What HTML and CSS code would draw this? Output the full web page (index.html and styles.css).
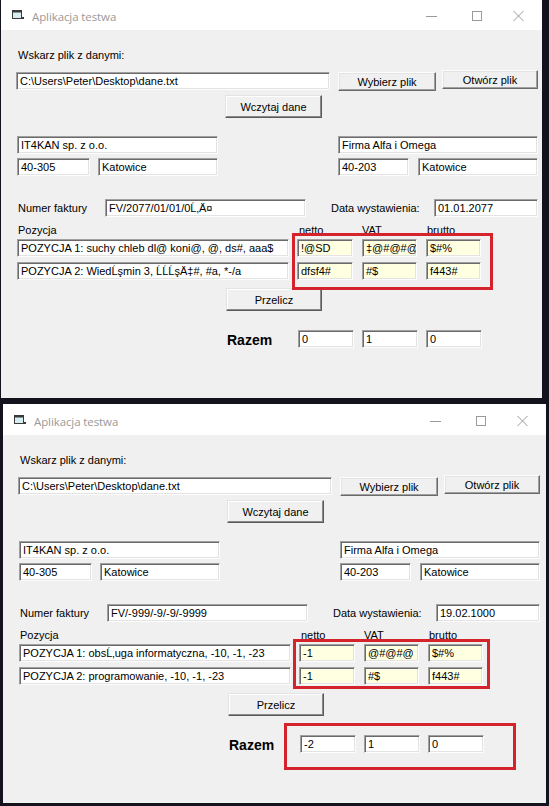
FILE: index.html
```html
<!DOCTYPE html>
<html lang="pl">
<head>
<meta charset="utf-8">
<title>Aplikacja testwa</title>
<link rel="stylesheet" href="styles.css">
</head>
<body>
<div class="desk">

  <div class="win win1">
    <div class="titlebar">
      <svg class="appicon" width="12" height="11" viewBox="0 0 12 11"><rect x="0.5" y="0.5" width="9" height="8" fill="#d6eef2" stroke="#3a3a3a"/><rect x="0.5" y="0.5" width="9" height="2" fill="#3a3a3a"/><rect x="10" y="7" width="2" height="2" fill="#3a3a3a"/></svg>
      <span class="title">Aplikacja testwa</span>
      <div class="ctrls">
        <svg class="c-min" width="11" height="10" viewBox="0 0 11 10"><line x1="0" y1="5.5" x2="11" y2="5.5" stroke="#9a9a9a" stroke-width="1"/></svg>
        <svg class="c-max" width="10" height="10" viewBox="0 0 10 10"><rect x="0.5" y="0.5" width="9" height="9" fill="none" stroke="#9a9a9a"/></svg>
        <svg class="c-close" width="11" height="10" viewBox="0 0 11 10"><path d="M0.5 0 L10.5 10 M10.5 0 L0.5 10" stroke="#9a9a9a" stroke-width="1"/></svg>
      </div>
    </div>
    <div class="body">
      <div class="row r-lbl"><span class="lbl ml17">Wskarz plik z danymi:</span></div>
      <div class="row r-path">
        <div class="tb w-path">C:\Users\Peter\Desktop\dane.txt</div>
        <div class="btn b-wyb">Wybierz plik</div>
        <div class="btn b-otw">Otwórz plik</div>
      </div>
      <div class="row r-load"><div class="btn def b-load">Wczytaj dane</div></div>
      <div class="row r-firm">
        <div class="tb w-name1">IT4KAN sp. z o.o.</div>
        <div class="tb w-name2">Firma Alfa i Omega</div>
      </div>
      <div class="row r-addr">
        <div class="tb w-zip1">40-305</div>
        <div class="tb w-city1">Katowice</div>
        <div class="tb w-zip2">40-203</div>
        <div class="tb w-city2">Katowice</div>
      </div>
      <div class="row r-inv">
        <span class="lbl l-num">Numer faktury</span>
        <div class="tb w-fv">FV/2077/01/01/0Ĺ‚Ä¤</div>
        <span class="lbl l-date">Data wystawienia:</span>
        <div class="tb w-date">01.01.2077</div>
      </div>
      <div class="row r-hdr">
        <span class="lbl l-poz">Pozycja</span>
        <span class="lbl l-netto">netto</span>
        <span class="lbl l-vat">VAT</span>
        <span class="lbl">brutto</span>
      </div>
      <div class="row r-item1">
        <div class="tb w-item">POZYCJA 1: suchy chleb dl@ koni@, @, ds#, aaa$</div>
        <div class="tb y w-n">!@SD</div>
        <div class="tb y w-v">‡@#@#@</div>
        <div class="tb y w-b">$#%</div>
      </div>
      <div class="row r-item2">
        <div class="tb w-item">POZYCJA 2: WiedĹşmin 3, ĹĹĹşÄ‡#, #a, *-/a</div>
        <div class="tb y w-n">dfsf4#</div>
        <div class="tb y w-v">#$</div>
        <div class="tb y w-b">f443#</div>
      </div>
      <div class="row r-calc"><div class="btn def b-calc">Przelicz</div></div>
      <div class="row r-sum">
        <span class="razem">Razem</span>
        <div class="tb w-s1">0</div>
        <div class="tb w-s2">1</div>
        <div class="tb w-s3">0</div>
      </div>
      <div class="mark mark-a1"></div>
    </div>
  </div>

  <div class="win win2">
    <div class="titlebar">
      <svg class="appicon" width="12" height="11" viewBox="0 0 12 11"><rect x="0.5" y="0.5" width="9" height="8" fill="#d6eef2" stroke="#3a3a3a"/><rect x="0.5" y="0.5" width="9" height="2" fill="#3a3a3a"/><rect x="10" y="7" width="2" height="2" fill="#3a3a3a"/></svg>
      <span class="title">Aplikacja testwa</span>
      <div class="ctrls">
        <svg class="c-min" width="11" height="10" viewBox="0 0 11 10"><line x1="0" y1="5.5" x2="11" y2="5.5" stroke="#9a9a9a" stroke-width="1"/></svg>
        <svg class="c-max" width="10" height="10" viewBox="0 0 10 10"><rect x="0.5" y="0.5" width="9" height="9" fill="none" stroke="#9a9a9a"/></svg>
        <svg class="c-close" width="11" height="10" viewBox="0 0 11 10"><path d="M0.5 0 L10.5 10 M10.5 0 L0.5 10" stroke="#9a9a9a" stroke-width="1"/></svg>
      </div>
    </div>
    <div class="body">
      <div class="row r-lbl"><span class="lbl ml17">Wskarz plik z danymi:</span></div>
      <div class="row r-path">
        <div class="tb w-path">C:\Users\Peter\Desktop\dane.txt</div>
        <div class="btn b-wyb">Wybierz plik</div>
        <div class="btn b-otw">Otwórz plik</div>
      </div>
      <div class="row r-load"><div class="btn def b-load">Wczytaj dane</div></div>
      <div class="row r-firm">
        <div class="tb w-name1">IT4KAN sp. z o.o.</div>
        <div class="tb w-name2">Firma Alfa i Omega</div>
      </div>
      <div class="row r-addr">
        <div class="tb w-zip1">40-305</div>
        <div class="tb w-city1">Katowice</div>
        <div class="tb w-zip2">40-203</div>
        <div class="tb w-city2">Katowice</div>
      </div>
      <div class="row r-inv">
        <span class="lbl l-num">Numer faktury</span>
        <div class="tb w-fv">FV/-999/-9/-9/-9999</div>
        <span class="lbl l-date">Data wystawienia:</span>
        <div class="tb w-date">19.02.1000</div>
      </div>
      <div class="row r-hdr">
        <span class="lbl l-poz">Pozycja</span>
        <span class="lbl l-netto">netto</span>
        <span class="lbl l-vat">VAT</span>
        <span class="lbl">brutto</span>
      </div>
      <div class="row r-item1">
        <div class="tb w-item">POZYCJA 1: obsĹ‚uga informatyczna, -10, -1, -23</div>
        <div class="tb y w-n">-1</div>
        <div class="tb y w-v">@#@#@</div>
        <div class="tb y w-b">$#%</div>
      </div>
      <div class="row r-item2">
        <div class="tb w-item">POZYCJA 2: programowanie, -10, -1, -23</div>
        <div class="tb y w-n">-1</div>
        <div class="tb y w-v">#$</div>
        <div class="tb y w-b">f443#</div>
      </div>
      <div class="row r-calc"><div class="btn def b-calc">Przelicz</div></div>
      <div class="row r-sum">
        <span class="razem">Razem</span>
        <div class="tb w-s1">-2</div>
        <div class="tb w-s2">1</div>
        <div class="tb w-s3">0</div>
      </div>
      <div class="mark mark-b1"></div>
      <div class="mark mark-b2"></div>
    </div>
  </div>

</div>
</body>
</html>
```

FILE: styles.css
```css
html, body {
  margin: 0;
  padding: 0;
  background: #13131d;
  overflow: hidden;
}

.desk {
  width: 549px;
  height: 806px;
  overflow: hidden;
  font-family: "Liberation Sans", Arial, sans-serif;
  font-size: 11px;
  color: #000;
}

.win {
  display: flex;
  flex-direction: column;
  height: 399px;
  background: #f0f0f0;
  overflow: hidden;
}

.win1 {
  width: 541px;
  margin-left: 1px;
  margin-top: -1px;
}

.win2 {
  width: 543px;
  margin-left: 3px;
  margin-top: 6px;
}

/* ---------- title bar ---------- */
.titlebar {
  box-sizing: border-box;
  height: 31px;
  padding-top: 3px;
  background: #fff;
  display: flex;
  align-items: center;
  flex-shrink: 0;
}

.appicon {
  margin-left: 11px;
  margin-top: -1px;
}

.title {
  margin-left: 8px;
  font-family: "Open Sans", "Noto Sans", sans-serif;
  font-size: 11.5px;
  color: #9a9a9a;
  letter-spacing: -0.1px;
}

.ctrls {
  margin-left: auto;
  display: flex;
  align-items: center;
  padding-right: 18px;
}

.c-max {
  margin-left: 35px;
}

.c-close {
  margin-left: 31px;
}

/* ---------- body ---------- */
.body {
  position: relative;
  flex: 1;
  background: #f0f0f0;
}

.row {
  display: flex;
  align-items: flex-start;
}

.lbl {
  line-height: 13px;
  white-space: nowrap;
}

.ml17 {
  margin-left: 17px;
}

/* text boxes */
.tb {
  box-sizing: border-box;
  height: 18px;
  line-height: 16px;
  padding-left: 3px;
  background: #fff;
  border: 1px solid;
  border-color: #a0a0a0 #fdfdfd #fdfdfd #a0a0a0;
  box-shadow: inset 1px 1px 0 #6a6a6a, inset -1px -1px 0 #e3e3e3;
  white-space: nowrap;
  overflow: hidden;
}

.tb.y {
  background: #ffffe1;
}

/* buttons */
.btn {
  box-sizing: border-box;
  display: flex;
  align-items: center;
  justify-content: center;
  background: #f0f0f0;
  border: 1px solid;
  border-color: #fdfdfd #6a6a6a #6a6a6a #fdfdfd;
  box-shadow: inset -1px -1px 0 #a0a0a0, inset 1px 1px 0 #e3e3e3;
  white-space: nowrap;
}

.btn.def {
  border-color: #e3e3e3 #5a5a5a #5a5a5a #e3e3e3;
  box-shadow: inset -1px -1px 0 #8a8a8a, inset 1px 1px 0 #fff;
}

/* row: label */
.r-lbl {
  margin-top: 19px;
  height: 13px;
}

/* row: path */
.r-path {
  margin-top: 8px;
  height: 21px;
}

.w-path {
  width: 314px;
  margin-left: 15px;
  margin-top: 2px;
}

.b-wyb {
  width: 98px;
  height: 19px;
  margin-left: 8px;
  margin-top: 2px;
}

.b-otw {
  width: 96px;
  height: 19px;
  margin-left: 6px;
}

/* row: load */
.r-load {
  margin-top: 4px;
  height: 23px;
}

.b-load {
  width: 97px;
  height: 23px;
  margin-left: 224px;
}

/* firms */
.r-firm {
  margin-top: 18px;
}

.w-name1 {
  width: 201px;
  margin-left: 16px;
}

.w-name2 {
  width: 200px;
  margin-left: 120px;
}

.r-addr {
  margin-top: 4px;
}

.w-zip1 {
  width: 73px;
  margin-left: 16px;
}

.w-city1 {
  width: 120px;
  margin-left: 8px;
}

.w-zip2 {
  width: 71px;
  margin-left: 120px;
}

.w-city2 {
  width: 120px;
  margin-left: 9px;
}

/* invoice */
.r-inv {
  margin-top: 23px;
  height: 18px;
  align-items: center;
}

.l-num {
  width: 87px;
  margin-left: 17px;
  line-height: 18px;
  margin-top: -1px;
}

.w-fv {
  width: 201px;
}

.l-date {
  width: 103px;
  margin-left: 25px;
  line-height: 18px;
  margin-top: -1px;
}

.w-date {
  width: 104px;
}

/* headers */
.r-hdr {
  margin-top: 7px;
  height: 13px;
}

.l-poz {
  width: 281px;
  margin-left: 17px;
}

.l-netto {
  width: 63px;
}

.l-vat {
  width: 65px;
}

/* items */
.r-item1 {
  margin-top: 2px;
}

.r-item2 {
  margin-top: 5px;
}

.w-item {
  width: 272px;
  margin-left: 16px;
}

.w-n {
  width: 56px;
  margin-left: 8px;
}

.w-v {
  width: 55px;
  margin-left: 9px;
}

.w-b {
  width: 55px;
  margin-left: 9px;
}

/* calc */
.r-calc {
  margin-top: 8px;
  height: 23px;
}

.b-calc {
  width: 96px;
  height: 23px;
  margin-left: 225px;
}

/* sum */
.r-sum {
  margin-top: 18px;
  align-items: center;
}

.razem {
  width: 71px;
  margin-left: 226px;
  font-size: 14px;
  font-weight: bold;
  line-height: 18px;
  margin-top: 2px;
}

.w-s1 {
  width: 56px;
}

.w-s2 {
  width: 56px;
  margin-left: 8px;
}

.w-s3 {
  width: 56px;
  margin-left: 8px;
}

/* red annotation frames */
.mark {
  position: absolute;
  box-sizing: border-box;
  border: 3px solid #d5232c;
}

.mark-a1 {
  left: 291px;
  top: 203px;
  width: 201px;
  height: 57px;
}

.mark-b1 {
  left: 290px;
  top: 204px;
  width: 197px;
  height: 50px;
}

.mark-b2 {
  left: 281px;
  top: 288px;
  width: 232px;
  height: 47px;
}
```
